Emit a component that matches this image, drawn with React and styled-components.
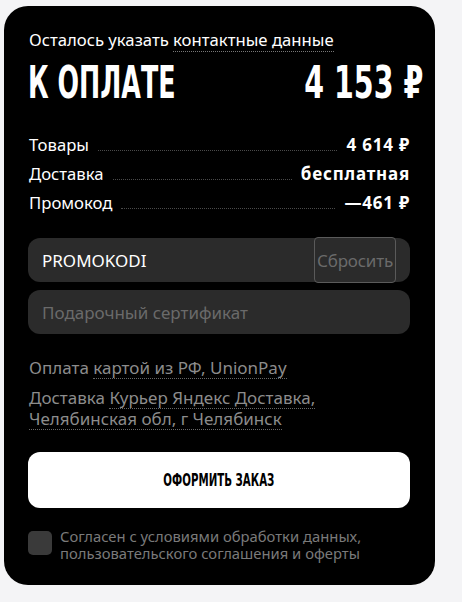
import React, { useState } from 'react';
import styled, { createGlobalStyle } from 'styled-components';

const Global = createGlobalStyle`
  body {
    margin: 0;
    background: #f4f4f6;
    font-family: "Noto Sans", "Liberation Sans", sans-serif;
  }
`;

const Page = styled.div`
  padding: 6px 0 18px 4px;
`;

const Card = styled.section`
  width: 431px;
  box-sizing: border-box;
  background: #000;
  border-radius: 24px;
  padding: 23px 25px 23px 24px;
  color: #fff;
`;

const Notice = styled.p`
  margin: 0 0 0 1px;
  font-size: 16.7px;
  line-height: 22px;
  color: #fff;
`;

const Dotted = styled.span`
  display: ${p => (p.$block ? 'inline-block' : 'inline')};
  border-bottom: 1px dotted ${p => p.$color || '#888'};
`;

const TotalRow = styled.div`
  display: flex;
  justify-content: space-between;
  align-items: center;
  margin-top: 9px;
  height: 44px;
`;

const Condensed = styled.span`
  display: inline-block;
  font-family: "Liberation Sans Narrow", "DejaVu Sans Condensed", "Liberation Sans", sans-serif;
  font-weight: ${p => p.$weight || 700};
  font-size: ${p => p.$size}px;
  color: ${p => p.$color || '#fff'};
  transform: scaleX(${p => p.$scale || 1});
  transform-origin: ${p => (p.$right ? 'right' : p.$center ? 'center' : 'left')} center;
  white-space: nowrap;
`;

const Lines = styled.div`
  margin-top: 29px;
  display: flex;
  flex-direction: column;
  gap: 6px;
`;

const Line = styled.div`
  display: flex;
  align-items: baseline;
  font-size: 16.7px;
  line-height: 23px;
`;

const Label = styled.span`
  color: #fff;
  margin-left: 1px;
`;

const Leader = styled.span`
  flex: 1;
  margin: 0 9px;
  border-bottom: 1px dotted #4a4a4a;
`;

const Value = styled.span`
  font-weight: 700;
  font-size: 17px;
  letter-spacing: 0.8px;
  color: #fff;
`;

const Inputs = styled.div`
  margin-top: 24px;
  display: flex;
  flex-direction: column;
  gap: 8px;
`;

const Field = styled.div`
  height: 44px;
  border-radius: 12px;
  background: #2b2b2b;
  display: flex;
  align-items: center;
  padding: 0 14px;
`;

const Input = styled.input`
  flex: 1;
  min-width: 0;
  background: transparent;
  border: none;
  outline: none;
  font-family: inherit;
  font-size: 17px;
  color: #fff;
  padding: 0;
  &::placeholder {
    color: #6a6a6a;
  }
`;

const Reset = styled.button`
  height: 46px;
  width: 82px;
  padding: 0;
  background: #2b2b2b;
  border: 1px solid #5a5a5a;
  border-radius: 4px;
  font-family: inherit;
  font-size: 17px;
  letter-spacing: -0.2px;
  color: #6a6a6a;
  white-space: nowrap;
`;

const Info = styled.div`
  margin-top: 24px;
  display: flex;
  flex-direction: column;
  gap: 9px;
  font-size: 17px;
  line-height: 20px;
  color: #8c8c8c;
  padding-left: 1px;
`;

const Submit = styled.button`
  margin-top: 22px;
  width: 100%;
  height: 56px;
  border: none;
  border-radius: 12px;
  background: #fff;
  cursor: pointer;
`;

const Agree = styled.label`
  margin-top: 20px;
  display: flex;
  gap: 8px;
  align-items: flex-start;
  font-size: 14.8px;
  line-height: 17px;
  color: #7a7a7a;
`;

const Box = styled.span`
  flex: none;
  width: 24px;
  height: 24px;
  margin-top: 3px;
  border-radius: 5px;
  background: ${p => (p.$on ? '#fff' : '#3a3a3a')};
`;

const rows = [
  ['Товары', '4 614 ₽'],
  ['Доставка', 'бесплатная'],
  ['Промокод', '—461 ₽'],
];

export default function App() {
  const [promo, setPromo] = useState('PROMOKODI');
  const [agree, setAgree] = useState(false);

  return (
    <Page>
      <Global />
      <Card>
        <Notice>
          Осталось указать <Dotted $color="#777">контактные данные</Dotted>
        </Notice>
        <TotalRow>
          <Condensed $size={44} $scale={0.64}>К ОПЛАТЕ</Condensed>
          <Condensed $size={44} $scale={0.72} $right>4 153 ₽</Condensed>
        </TotalRow>
        <Lines>
          {rows.map(([l, v]) => (
            <Line key={l}>
              <Label>{l}</Label>
              <Leader />
              <Value>{v}</Value>
            </Line>
          ))}
        </Lines>
        <Inputs>
          <Field>
            <Input value={promo} onChange={e => setPromo(e.target.value)} />
            <Reset onClick={() => setPromo('')}>Сбросить</Reset>
          </Field>
          <Field>
            <Input placeholder="Подарочный сертификат" />
          </Field>
        </Inputs>
        <Info>
          <div>
            Оплата <Dotted $block $color="#666">картой из РФ, UnionPay</Dotted>
          </div>
          <div>
            Доставка <Dotted $block $color="#666">Курьер Яндекс Доставка,</Dotted>
            <br />
            <Dotted $block $color="#666">Челябинская обл, г Челябинск</Dotted>
          </div>
        </Info>
        <Submit>
          <Condensed $size={17} $scale={0.67} $center $color="#000">ОФОРМИТЬ ЗАКАЗ</Condensed>
        </Submit>
        <Agree onClick={() => setAgree(!agree)}>
          <Box $on={agree} />
          <span>Согласен с условиями обработки данных, пользовательского соглашения и оферты</span>
        </Agree>
      </Card>
    </Page>
  );
}
